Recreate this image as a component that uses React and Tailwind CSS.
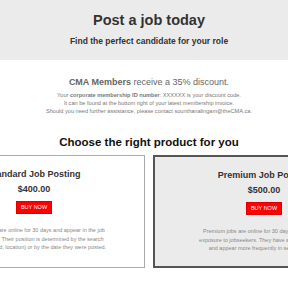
export default function App() {
  return (
    <div className="w-[288px] h-[288px] overflow-hidden bg-white font-['Liberation_Sans',Arial,sans-serif]">
      <div className="bg-[#ebebeb] h-[60px] pl-[10px] flex flex-col items-center pt-[11px]">
        <h1 className="text-[14.5px] leading-[19px] font-bold text-[#333]">Post a job today</h1>
        <p className="text-[8.5px] leading-[12px] font-bold text-[#333] mt-[5px]">
          Find the perfect candidate for your role
        </p>
      </div>
      <div className="pl-[10px] flex flex-col items-center text-center">
        <p className="mt-[15px] text-[9px] leading-[14px] text-[#666]">
          <b>CMA Members</b> receive a 35% discount.
        </p>
        <div className="mt-[2px] text-[5.6px] leading-[8px] text-[#777]">
          <p>
            Your <b>corporate membership ID number</b>: XXXXXX is your discount code.
          </p>
          <p>It can be found at the bottom right of your latest membership invoice.</p>
          <p>Should you need further assistance, please contact sounthanalingam@theCMA.ca.</p>
        </div>
        <h2 className="mt-[18px] text-[11.5px] leading-[18px] font-bold text-[#111]">
          Choose the right product for you
        </h2>
      </div>
      <div className="flex justify-center gap-[8px] mt-[4px] pl-[10px]">
        <Card
          title="Standard Job Posting"
          price="$400.00"
          className="border border-[#aaa] bg-white"
          lines={[
            "Standard jobs are online for 30 days and appear in the job",
            "search results. Their position is determined by the search",
            "criteria (keyword, location) or by the date they were posted.",
          ]}
        />
        <Card
          title="Premium Job Posting"
          price="$500.00"
          className="border-2 border-[#555] bg-[#ebebeb]"
          lines={[
            "Premium jobs are online for 30 days and get more",
            "exposure to jobseekers. They have a highlighted look",
            "and appear more frequently in search results.",
          ]}
        />
      </div>
    </div>
  );
}

function Card({ title, price, lines, className }) {
  return (
    <div className={"shrink-0 w-[222px] h-[113px] flex flex-col items-center pt-[12px] " + className}>
      <h3 className="text-[9px] leading-[13px] font-bold text-[#333]">{title}</h3>
      <p className="mt-[2px] text-[9px] leading-[13px] font-bold text-[#333]">{price}</p>
      <button className="mt-[5px] w-[36px] h-[13px] bg-[#ff0000] border border-[#d00] text-white text-[5.5px] leading-none">
        BUY NOW
      </button>
      <div className="mt-[12px] text-[5.5px] leading-[8.5px] text-[#888] text-center whitespace-nowrap">
        {lines.map((l) => (
          <p key={l}>{l}</p>
        ))}
      </div>
    </div>
  );
}
